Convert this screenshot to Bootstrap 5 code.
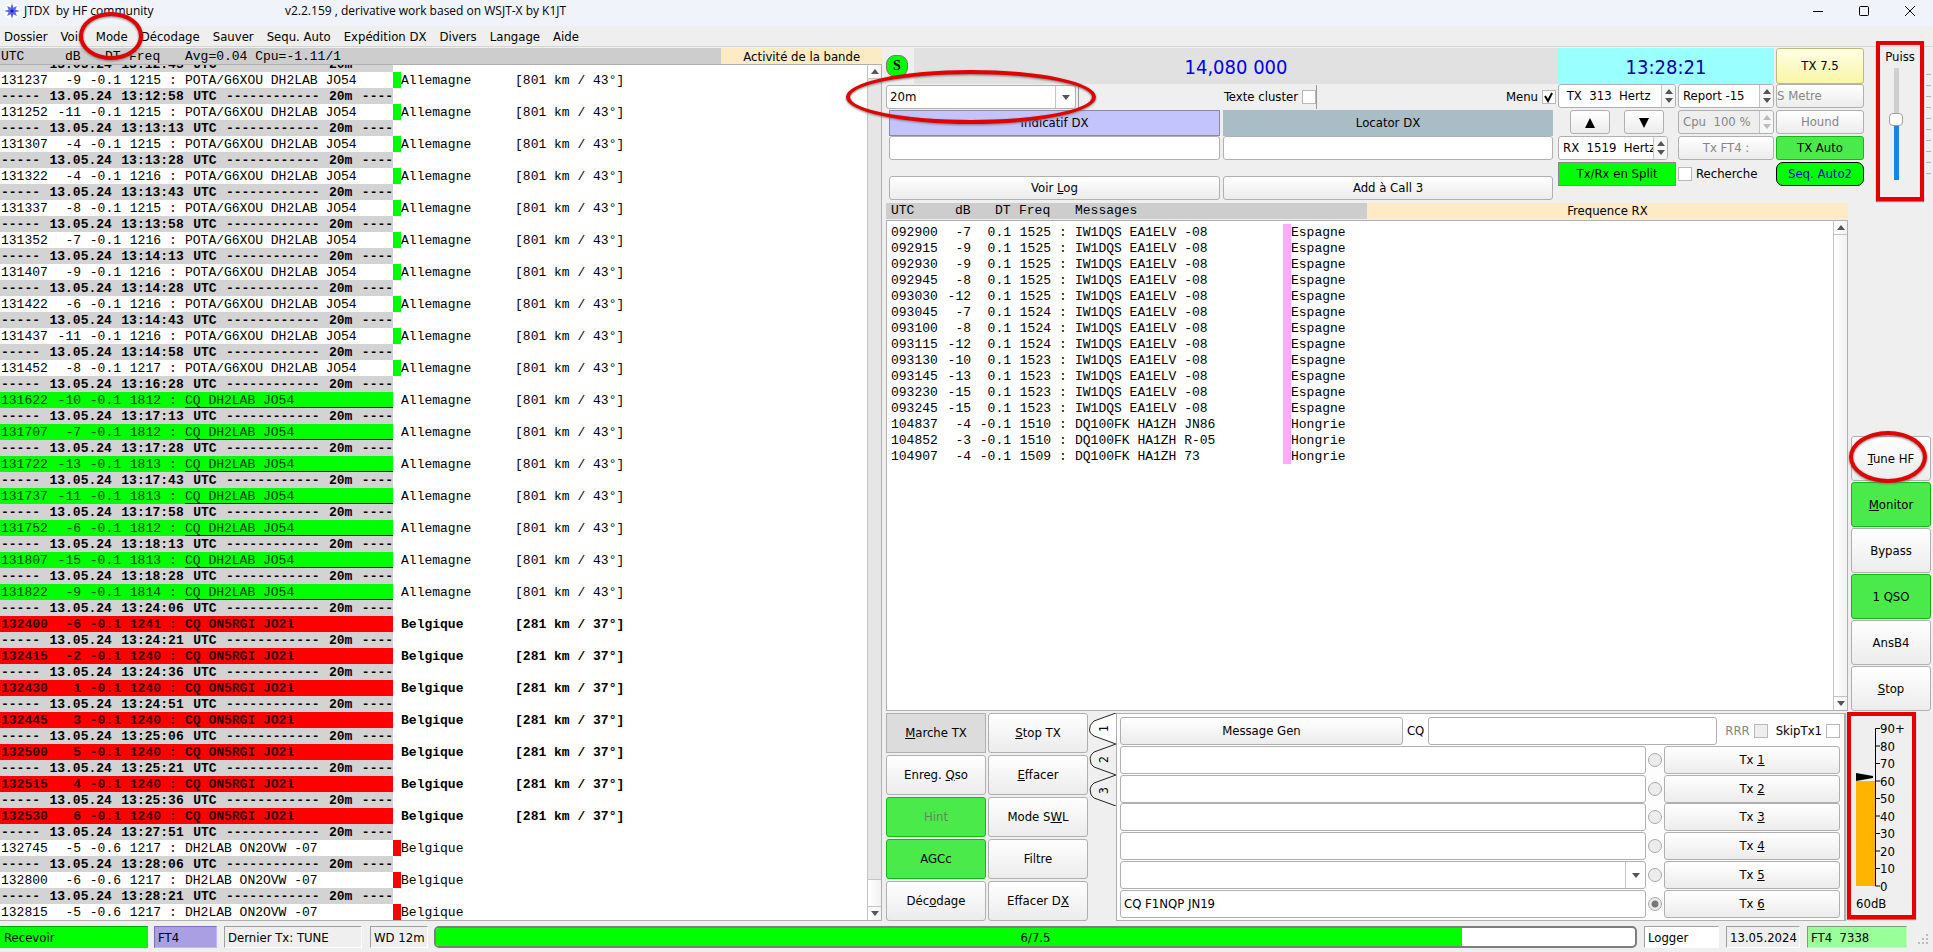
<!DOCTYPE html>
<html lang="fr">
<head>
<meta charset="utf-8">
<meta name="viewport" content="width=device-width, initial-scale=1">
<title>JTDX by HF community</title>
<link href="https://cdn.jsdelivr.net/npm/bootstrap@5.3.0/dist/css/bootstrap.min.css" rel="stylesheet">
<style>
:root { --edge:#b0b0b0; --face:#efefef; --live:#4aea4a; --mark:#e30000; }
body { font-family:"DejaVu Sans Condensed","DejaVu Sans",sans-serif; font-size:13px; line-height:16px; color:#000; background:var(--face); }
input, button, select { font:inherit; color:inherit; }
.mono { font-family:"Liberation Mono",monospace; font-size:13px; }

.title-bar { height:26px; background:#f0f3f9; font-family:"Open Sans",sans-serif; font-size:12px; padding:0 14px 4px 4px; }
.app-name { width:261px; white-space:pre; }
.win-tools { gap:28px; }
.win-btn { border:0; background:none; padding:0; width:18px; height:18px; line-height:0; }
.menu-bar { height:21px; border-bottom:1px solid #d4d4d4; padding:1px 0 0 4px; gap:13px; }
.menu-bar a { color:#000; text-decoration:none; }

.main-grid { display:grid; grid-template-columns:minmax(0,885fr) minmax(0,1048fr); min-height:0; padding-top:1px; }
.left-pane { padding-right:3px; min-height:0; }
.log-head { background:#cdcdcd; height:16px; line-height:18px; padding-left:1px; white-space:pre; }
.log-head.inset-head { padding-left:5px; line-height:16px; }
.h-utc { width:64px; } .h-db { width:40px; } .h-dt { width:24px; } .h-fr { width:56px; }
.log-title { background:#fcebc5; height:16px; }
.band-title { width:18.2%; line-height:18px; }
.log-box { background:#fff; border:1px solid var(--edge); border-left:0; min-height:0; }
.log-box.boxed { border-left:1px solid var(--edge); margin-top:1px; }
.log-view { min-width:0; overflow:hidden; }
.rx-view { padding:3px 0 0 3px; }
.c-utc{width:57px}.c-db{width:24px}.c-dt{width:40px}.c-fr{width:40px}.c-co{width:24px}.c-ms{width:208px}.c-fl{width:8px}.c-pl{width:114px}

.log-table { table-layout:fixed; width:100%; border-collapse:collapse; line-height:14px; }
.log-table td { height:16px; padding:2px 0 0; white-space:pre; overflow:hidden; }
.log-table td:first-child { padding-left:1px; }
.log-table .sep td.sep-cell { background:#d3d3d3; font-weight:bold; }
.log-table .calling td.on { background:#00ff00; color:#003800; }
.log-table .calling td.msg { box-shadow:inset 0 -1px #000; }
.log-table .wanted { font-weight:bold; }
.log-table .wanted td.on { background:#ff0000; color:#300; }
.flag-g { background:#00ff00; } .flag-r { background:#ff0000; } .flag-p { background:#ffaaff; }

.scroll-rail { width:14px; flex:none; background:#e6e6e6; border-left:1px solid #c4c4c4; }
.scroll-rail > * { border:0 solid #c4c4c4; width:100%; padding:0; line-height:0; }
.scroll-rail > :not(.rail-gap), .rail-full { background:linear-gradient(90deg,#fff,#f2f2f2); }
.scroll-rail > .rail-up { height:14px; border-bottom-width:1px; } .scroll-rail > .rail-down { height:14px; border-top-width:1px; }
.scroll-rail > .rail-thumb { height:27px; border-top-width:1px; }

.face { border:1px solid var(--edge); border-radius:3px; background:linear-gradient(#fff,#ececec); padding:0; text-align:center; white-space:nowrap; }
.face:disabled { color:#868686; }
.face.live { background:var(--live); border-color:#12b812; }
.face.live:disabled { color:#5d8a5d; }
.face.down { background:#dcdcdc; border-radius:0; }
.field { border:1px solid var(--edge); border-radius:3px; background:#fff; padding:0 3px; min-width:0; width:100%; }
.h24 { height:24px; }
.tick { appearance:none; flex:none; width:14px; height:14px; margin:0; border:1px solid #b8b8b8; background:#fff; }
.tick:disabled { background:#eee; }
.tick:checked { background:#fff url("data:image/svg+xml,%3Csvg xmlns='http://www.w3.org/2000/svg' viewBox='0 0 12 12'%3E%3Cpath d='M2 5l3 5 4-8' fill='none' stroke='black' stroke-width='2'/%3E%3C/svg%3E"); }

.freq { background:#e1e1e1; color:#0000ee; }
.clock { background:#99ffff; color:#0000a8; grid-column:span 2; }
.big { font-size:20px; line-height:38px; height:36px; }
.s-badge { width:22px; height:22px; margin:7px 6px 0 0; border:1px solid #777; border-radius:9px; background:#00ff00; font:bold 14px/20px "Liberation Serif",serif; text-align:center; }
.tx75 { background:linear-gradient(#ffffe6,#f8f6a4); border-color:#bcbc74; }
.right-main { padding-left:1px; min-width:0; min-height:0; }
.band { width:190px; }
.band-row { height:26px; }
.band-end { border-right:1px solid #999; width:3px; }
.cluster-gap { height:24px; width:226px; border-left:1px solid #999; }
.menu-tick { padding-right:2px; }
.pick { position:relative; }
.pick svg { position:absolute; right:6px; top:50%; margin-top:-2px; pointer-events:none; }
.pick::after { content:""; position:absolute; right:20px; top:1px; bottom:1px; border-left:1px solid #c4c4c4; }
.pick select { appearance:none; }
.dx-grid { display:grid; grid-template-columns:331fr 330fr; gap:0 3px; padding:0 5px 0 3px; grid-template-rows:26px 24px 16px 24px; }
.dx-log { grid-row:4; }
.dx-call { background:#c3c3fe; border:1px solid #8a8aa8; padding:0; }
.dx-loc { background:#a9bdc7; border:0; padding:0; }
.ctrl { width:306px; display:grid; grid-template-columns:118px 96px 88px; grid-template-rows:36px repeat(4,26px); gap:0 2px; }
.ctrl .face { height:24px; }
.ctrl .tx75 { height:36px; }
.nudge { gap:14px; } .nudge .face { width:40px; }
.spin { height:24px; border:1px solid var(--edge); border-radius:3px; background:#fff; display:flex; overflow:hidden; }
.spin input { border:0; background:none; min-width:0; flex:1; padding:0 0 0 4px; }
.spin.short-spin { width:110px; }
.spin svg { flex:none; border-left:1px solid #c4c4c4; background:#f6f6f6; }
.spin.off { background:#eee; color:#868686; }
.split { background:#00ff00; border:1px solid #888; height:24px; padding:0; }
.ctrl .auto2 { background:#00ff00; border:1px solid #000; border-radius:7px; color:#0000d0; }

.side { width:69px; }
.power { width:48px; height:160px; margin:-7px 0 0 12px; border:4px solid var(--mark); box-shadow:0 1px 1px #888; padding-top:4px; }
.power-slot { width:14px; height:112px; margin:3px 0 0 9px; }
.power-slot input { appearance:none; flex:none; width:112px; height:14px; margin:0; transform:rotate(-90deg); background:linear-gradient(90deg,#1287e8 54%,#cfcfcf 54%) center/100% 5px no-repeat; }
.power-slot input::-webkit-slider-thumb { appearance:none; width:13px; height:14px; border:1px solid #a0a0a0; border-radius:4px; background:#fff; }
.scale-ticks { width:5px; margin:26px 0 0 2px; }
.scale-ticks i { display:block; height:1px; margin-bottom:10px; background:#b4b4b4; }

.rx-area { min-height:0; }
.rx-pane { min-width:0; padding-top:2px; }
.side-btns { width:85px; padding:0 2px 0 3px; gap:1px; }
.side-btns .face { height:45px; width:100%; }
.tx-btns { width:202px; display:grid; grid-template-columns:1fr 1fr; gap:2px; }
.tx-btns .face { height:40px; width:100%; }
.bottom-pane { padding-top:2px; }
.tab-strip { width:27px; margin-left:1px; font-size:12px; }
.tab-strip button { display:block; border:0; background:none; padding:0; width:27px; height:31px; line-height:0; }
.gen-panel { background:#fdfdfd; border:1px solid var(--edge); border-right-width:2px; padding:3px 4px 2px 3px; min-width:0; }
.gen-head > .face, .gen-head > .field { flex:288 1 0; height:28px; }
.gen-row { display:grid; grid-template-columns:minmax(0,1fr) 18px 176px; align-items:center; }
.gen-row .field, .gen-row .face { height:28px; }
.gen-row input[type=radio] { appearance:none; width:14px; height:14px; margin:0 0 0 2px; border:1px solid #aaa; border-radius:50%; background:#ececec; }
.gen-row input[type=radio]:checked { background:radial-gradient(circle,#777 3px,#ececec 4px); }
.muted { color:#868686; }
.meter { width:69px; height:207px; margin:-1px 17px 0 1px; border:4px solid var(--mark); box-shadow:0 1px 1px #888; }

.status-bar { height:31px; padding:5px 0 4px; }
.cellbox { border:1px solid; border-color:#a0a0a0 #fff #fff #a0a0a0; padding:3px 3px 1px; white-space:pre; height:22px; }
.st-rx { width:148px; background:#00ff00; border-color:#00aa00 #00ff00 #00ff00; }
.st-mode { width:63px; margin-left:6px; background:#a99fe2; border-color:#7a70b8 #c0b8ff #c0b8ff #7a70b8; }
.st-tx { width:138px; margin-left:7px; } .st-wd { width:58px; margin-left:8px; }
.st-log { width:75px; background:#fff; } .st-date { width:74px; margin-left:7px; }
.st-ft { width:100px; margin-left:7px; background:#99ff99; border-color:#7aa07a #b8ffb8 #b8ffb8 #7aa07a; }
.period { border:2px solid #7d7d7d; border-radius:5px; height:22px; margin:0 7px 0 6px; background:#fff; position:relative; font-size:13px; }
.period .progress-bar { background:#00ff00; }
.period span { position:absolute; inset:0; text-align:center; line-height:20px; }
.grip { margin-left:10px; }

.ring-box { position:relative; }
.ring { position:absolute; border:4px solid var(--mark); border-radius:50%; pointer-events:none; filter:drop-shadow(0 1px 1px #777); z-index:5; }
.ring-mode { width:64px; height:48px; left:-17px; top:-17px; }
.ring-band { width:250px; height:54px; left:-40px; top:-15px; }
.ring-tune { width:78px; height:52px; left:-2px; top:-5px; }
</style>
</head>
<body class="vh-100 d-flex flex-column overflow-hidden">

<header class="title-bar d-flex align-items-center flex-shrink-0">
  <svg class="me-1" width="16" height="16" viewBox="0 0 16 16" aria-hidden="true"><circle cx="8" cy="8" r="8" fill="#fff"/><path d="M8 0l1.300 4.700L13 3l-1.700 3.700L16 8l-4.700 1.300L13 13l-3.700-1.700L8 16l-1.300-4.700L3 13l1.700-3.700L0 8l4.700-1.300L3 3l3.700 1.700z" fill="#5563ee"/><circle cx="8" cy="8" r="1.500" fill="#1a1ab0"/></svg>
  <span class="app-name">JTDX  by HF community</span>
  <span class="flex-fill">v2.2.159 , derivative work based on WSJT-X by K1JT</span>
  <div class="win-tools d-flex">
    <button class="win-btn" aria-label="Réduire"><svg width="18" height="18"><path d="M4 9.500h10" stroke="#000"/></svg></button>
    <button class="win-btn" aria-label="Agrandir"><svg width="18" height="18"><rect x="4.500" y="4.500" width="9" height="9" rx="1" fill="none" stroke="#000"/></svg></button>
    <button class="win-btn" aria-label="Fermer"><svg width="18" height="18"><path d="M4 4l10 10M14 4L4 14" stroke="#000"/></svg></button>
  </div>
</header>

<nav class="menu-bar d-flex align-items-center flex-shrink-0">
  <a href="#">Dossier</a><a href="#">Voir</a><span class="ring-box"><a href="#">Mode</a><i class="ring ring-mode"></i></span><a href="#">Décodage</a><a href="#">Sauver</a><a href="#">Sequ. Auto</a><a href="#">Expédition DX</a><a href="#">Divers</a><a href="#">Langage</a><a href="#">Aide</a>
</nav>

<main class="main-grid flex-fill">
  <section class="left-pane d-flex flex-column">
    <div class="d-flex flex-shrink-0">
      <div class="log-head mono d-flex flex-fill"><span class="h-utc">UTC</span><span class="h-db">dB</span><span class="h-dt">DT</span><span class="h-fr">Freq</span><span>Avg=0.04 Cpu=-1.11/1</span></div>
      <div class="log-title band-title text-center">Activité de la bande</div>
    </div>
    <div class="log-box d-flex flex-fill">
      <div class="log-view flex-fill d-flex flex-column justify-content-end">
        <table class="log-table mono flex-shrink-0" id="band-log"></table>
      </div>
      <div class="scroll-rail d-flex flex-column">
        <button class="rail-up" aria-label="Haut"><svg width="8" height="5"><path d="M0 5l4-5 4 5z" fill="#555"/></svg></button>
        <div class="rail-gap flex-fill"></div>
        <div class="rail-thumb"></div>
        <button class="rail-down" aria-label="Bas"><svg width="8" height="5"><path d="M0 0l4 5 4-5z" fill="#555"/></svg></button>
      </div>
    </div>
  </section>

  <section class="right-main d-flex flex-column">
    <div class="d-flex flex-shrink-0">
      <div class="flex-fill">
        <div class="d-flex"><div class="s-badge">S</div><div class="freq big flex-fill text-center">14,080 000</div></div>
        <div class="band-row d-flex align-items-center">
          <div class="ring-box pick band"><select class="field h24" aria-label="Bande"><option>20m</option></select><svg width="8" height="5"><path d="M0 0h8l-4 5z" fill="#555"/></svg><i class="ring ring-band"></i></div><span class="band-end h24"></span>
          <div class="menu-tick flex-fill d-flex justify-content-end align-items-center">
            <label for="cluster" class="me-1">Texte cluster</label><input type="checkbox" class="tick" id="cluster"><span class="cluster-gap d-flex justify-content-end align-items-center pe-1"><label for="menu">Menu</label></span><input type="checkbox" class="tick" id="menu" checked>
          </div>
        </div>
        <div class="dx-grid">
          <button class="dx-call">Indicatif DX</button><button class="dx-loc">Locator DX</button>
          <input class="field" aria-label="Indicatif DX"><input class="field" aria-label="Locator DX">
          <button class="face dx-log">Voir <u>L</u>og</button><button class="face dx-log">Add à Call 3</button>
        </div>
      </div>
      <div class="ctrl">
        <div class="clock big text-center">13:28:21</div><button class="face tx75">TX 7.5</button>
        <div class="spin"><input value=" TX  313  Hertz" aria-label="TX Hertz"><svg width="14" height="22"><path d="M3 9l4-5 4 5zM3 13l4 5 4-5z" fill="#555"/></svg></div>
        <div class="spin"><input value="Report -15" aria-label="Report"><svg width="14" height="22"><path d="M3 9l4-5 4 5zM3 13l4 5 4-5z" fill="#555"/></svg></div>
        <button class="face text-start" disabled>S Metre</button>
        <div class="nudge d-flex justify-content-center"><button class="face" aria-label="Monter"><svg width="10" height="10"><path d="M0 10L5 0l5 10z"/></svg></button><button class="face" aria-label="Descendre"><svg width="10" height="10"><path d="M0 0l5 10 5-10z"/></svg></button></div>
        <div class="spin off"><input value="Cpu  100 %" aria-label="Cpu" disabled><svg width="14" height="22"><path d="M3 9l4-5 4 5zM3 13l4 5 4-5z" fill="#bbb"/></svg></div>
        <button class="face" disabled>Hound</button>
        <div class="spin short-spin"><input value="RX  1519  Hertz" aria-label="RX Hertz"><svg width="14" height="22"><path d="M3 9l4-5 4 5zM3 13l4 5 4-5z" fill="#555"/></svg></div>
        <button class="face" disabled>Tx FT4 :</button><button class="face live">TX Auto</button>
        <button class="split">Tx/Rx en Split</button>
        <div class="d-flex align-items-center h24"><input type="checkbox" class="tick" id="rech"><label for="rech" class="ms-1">Recherche</label></div>
        <button class="face auto2">Seq. Auto2</button>
      </div>
      <div class="side d-flex align-items-start flex-shrink-0">
        <div class="power text-center flex-shrink-0">
          <label for="puiss">Puiss</label>
          <div class="power-slot d-flex justify-content-center align-items-center"><input type="range" id="puiss" value="55"></div>
        </div>
        <div class="scale-ticks"><i></i><i></i><i></i><i></i><i></i><i></i><i></i><i></i><i></i><i></i></div>
      </div>
    </div>

    <div class="rx-area d-flex flex-fill">
      <div class="rx-pane flex-fill d-flex flex-column">
        <div class="d-flex flex-shrink-0"><div class="log-head inset-head mono d-flex w-50"><span class="h-utc">UTC</span><span class="h-db">dB</span><span class="h-dt">DT</span><span class="h-fr">Freq</span><span>Messages</span></div><div class="log-title w-50 text-center">Frequence RX</div></div>
        <div class="log-box boxed d-flex flex-fill">
          <div class="log-view rx-view flex-fill"><table class="log-table mono" id="rx-log"></table></div>
          <div class="scroll-rail d-flex flex-column">
            <button class="rail-up" aria-label="Haut"><svg width="8" height="5"><path d="M0 5l4-5 4 5z" fill="#555"/></svg></button>
            <div class="rail-full flex-fill"></div>
            <button class="rail-down" aria-label="Bas"><svg width="8" height="5"><path d="M0 0l4 5 4-5z" fill="#555"/></svg></button>
          </div>
        </div>
      </div>
      <div class="side-btns d-flex flex-column justify-content-end flex-shrink-0">
        <div class="ring-box"><button class="face d-block"><u>T</u>une HF</button><i class="ring ring-tune"></i></div>
        <button class="face live"><u>M</u>onitor</button>
        <button class="face">Bypass</button>
        <button class="face live">1 QSO</button>
        <button class="face">AnsB4</button>
        <button class="face"><u>S</u>top</button>
      </div>
    </div>

    <div class="bottom-pane d-flex flex-shrink-0">
      <div class="tx-btns flex-shrink-0">
        <button class="face down"><u>M</u>arche TX</button><button class="face"><u>S</u>top TX</button>
        <button class="face">Enreg. <u>Q</u>so</button><button class="face"><u>E</u>ffacer</button>
        <button class="face live" disabled>Hint</button><button class="face">Mode S<u>W</u>L</button>
        <button class="face live">AGCc</button><button class="face">Filtre</button>
        <button class="face">Déc<u>o</u>dage</button><button class="face">Effacer D<u>X</u></button>
      </div>
      <div class="tab-strip flex-shrink-0">
        <button><svg width="27" height="31"><path d="M27 0L5 8Q0 12 0.500 17Q0 20 5 23L27 31" fill="#fff" stroke="#222"/><text transform="translate(19 19) rotate(-90)">1</text></svg></button>
        <button><svg width="27" height="31"><path d="M27 0L5 8Q0 12 1.500 17Q1 20 5 23L27 31" fill="#f0f0f0" stroke="#222"/><text transform="translate(19 19) rotate(-90)">2</text></svg></button>
        <button><svg width="27" height="31"><path d="M27 0L5 8Q0 12 1.500 17Q1 20 5 23L27 31" fill="#f0f0f0" stroke="#222"/><text transform="translate(19 19) rotate(-90)">3</text></svg></button>
      </div>
      <div class="gen-panel flex-fill d-flex flex-column justify-content-between">
        <div class="gen-head d-flex align-items-center">
          <button class="face">Message Gen</button>
          <label for="cq" class="mx-1">CQ</label><input class="field" id="cq">
          <label for="rrr" class="ms-2 me-1 muted">RRR</label><input type="checkbox" class="tick" id="rrr" disabled>
          <label for="skip" class="ms-2 me-1">SkipTx1</label><input type="checkbox" class="tick" id="skip">
        </div>
        <div class="gen-row"><input class="field" aria-label="Message 1"><input type="radio" name="tx" aria-label="Tx 1"><button class="face">Tx <u>1</u></button></div>
        <div class="gen-row"><input class="field" aria-label="Message 2"><input type="radio" name="tx" aria-label="Tx 2"><button class="face">Tx <u>2</u></button></div>
        <div class="gen-row"><input class="field" aria-label="Message 3"><input type="radio" name="tx" aria-label="Tx 3"><button class="face">Tx <u>3</u></button></div>
        <div class="gen-row"><input class="field" aria-label="Message 4"><input type="radio" name="tx" aria-label="Tx 4"><button class="face">Tx <u>4</u></button></div>
        <div class="gen-row"><div class="pick"><select class="field d-block" aria-label="Message 5"><option></option></select><svg width="8" height="5"><path d="M0 0h8l-4 5z" fill="#555"/></svg></div><input type="radio" name="tx" aria-label="Tx 5"><button class="face">Tx <u>5</u></button></div>
        <div class="gen-row"><input class="field" aria-label="Message 6" value="CQ F1NQP JN19"><input type="radio" name="tx" aria-label="Tx 6" checked><button class="face">Tx <u>6</u></button></div>
      </div>
      <div class="meter flex-shrink-0">
        <svg width="61" height="199" aria-label="60dB"><rect x="5" y="65" width="19" height="105" fill="#ffb400"/><path d="M5 57l17 3v2l-17 3z"/><path d="M29 12.500h-4.500v157.500h4.500M24 30h5M24 47.500h5M24 65h5M24 82.500h5M24 100h5M24 117.500h5M24 135h5M24 152.500h5" fill="none" stroke="#000"/><g id="meter-labels"></g><text x="5" y="192">60dB</text></svg>
      </div>
    </div>
  </section>
</main>

<footer class="status-bar d-flex align-items-center flex-shrink-0">
  <div class="cellbox st-rx">Recevoir</div>
  <div class="cellbox st-mode">FT4</div>
  <div class="cellbox st-tx">Dernier Tx: TUNE</div>
  <div class="cellbox st-wd">WD 12m</div>
  <div class="period progress flex-fill" role="progressbar" aria-label="Période"><div class="progress-bar" style="width:85.6%"></div><span>6/7.5</span></div>
  <div class="cellbox st-log">Logger</div>
  <div class="cellbox st-date">13.05.2024</div>
  <div class="cellbox st-ft">FT4  7338</div>
  <svg class="grip align-self-end" width="16" height="14" fill="#bbb"><path d="M9 0h2v2h-2zM5 4h2v2H5zM9 4h2v2h-2zM1 8h2v2H1zM5 8h2v2H5zM9 8h2v2h-2z"/></svg>
</footer>

<script>
const cols = '<colgroup>' + ['utc','db','dt','fr','co','ms','fl','pl'].map(c => `<col class="c-${c}">`).join('') + '<col></colgroup>';

function messageRow(utc, db, dt, freq, msg, kind, flag, place, dist) {
  return `<tr class="${kind}"><td class="on">${utc}</td><td class="on text-end">${db}</td><td class="on text-end">${dt}</td>` +
    `<td class="on text-end">${freq}</td><td class="on text-center">:</td><td class="on msg">${msg}</td>` +
    `<td class="${flag}"></td><td>${place}</td><td>${dist}</td></tr>`;
}
function separatorRow(time) {
  return `<tr class="sep"><td class="sep-cell" colspan="6"><div class="d-flex justify-content-between"><span>-----</span><span>13.05.24</span><span>${time}</span><span>UTC</span><span>------------</span><span>20m</span><span>----</span></div></td><td colspan="3"></td></tr>`;
}

const de = ['Allemagne', '[801 km / 43°]'], be = ['Belgique', '[281 km / 37°]'];
const band = [];
const pota = [['13:12:43','131237',-9,1215],['13:12:58','131252',-11,1215],['13:13:13','131307',-4,1215],['13:13:28','131322',-4,1216],['13:13:43','131337',-8,1215],['13:13:58','131352',-7,1216],['13:14:13','131407',-9,1216],['13:14:28','131422',-6,1216],['13:14:43','131437',-11,1216],['13:14:58','131452',-8,1217]];
const calls = [['13:16:28','131622',-10,1812],['13:17:13','131707',-7,1812],['13:17:28','131722',-13,1813],['13:17:43','131737',-11,1813],['13:17:58','131752',-6,1812],['13:18:13','131807',-15,1813],['13:18:28','131822',-9,1814]];
const wanted = [['13:24:06','132400',-6,1241],['13:24:21','132415',-2,1240],['13:24:36','132430',1,1240],['13:24:51','132445',3,1240],['13:25:06','132500',5,1240],['13:25:21','132515',4,1240],['13:25:36','132530',6,1240]];
const last = [['13:27:51','132745',-5,1217],['13:28:06','132800',-6,1217],['13:28:21','132815',-5,1217]];
pota.forEach(r => band.push(separatorRow(r[0]), messageRow(r[1], r[2], '-0.1', r[3], 'POTA/G6XOU DH2LAB JO54', '', 'flag-g', ...de)));
calls.forEach(r => band.push(separatorRow(r[0]), messageRow(r[1], r[2], '-0.1', r[3], 'CQ DH2LAB JO54', 'calling', '', ...de)));
wanted.forEach(r => band.push(separatorRow(r[0]), messageRow(r[1], r[2], '-0.1', r[3], 'CQ ON5RGI JO21', 'wanted', '', ...be)));
last.forEach(r => band.push(separatorRow(r[0]), messageRow(r[1], r[2], '-0.6', r[3], 'DH2LAB ON2OVW -07', '', 'flag-r', be[0], '')));
document.getElementById('band-log').innerHTML = cols + band.join('');

const rx = [['092900',-7,1525],['092915',-9,1525],['092930',-9,1525],['092945',-8,1525],['093030',-12,1525],['093045',-7,1524],['093100',-8,1524],['093115',-12,1524],['093130',-10,1523],['093145',-13,1523],['093230',-15,1523],['093245',-15,1523]]
  .map(r => messageRow(r[0], r[1], '0.1', r[2], 'IW1DQS EA1ELV -08', '', 'flag-p', 'Espagne', ''));
[['104837',-4,1510,'JN86'],['104852',-3,1510,'R-05'],['104907',-4,1509,'73']]
  .forEach(r => rx.push(messageRow(r[0], r[1], '-0.1', r[2], 'DQ100FK HA1ZH ' + r[3], '', 'flag-p', 'Hongrie', '')));
document.getElementById('rx-log').innerHTML = cols + rx.join('');

document.getElementById('meter-labels').innerHTML =
  ['90+',80,70,60,50,40,30,20,10,0].map((v, i) => `<text x="29" y="${17 + Math.round(i * 17.5)}">${v}</text>`).join('');
</script>
<script src="https://cdn.jsdelivr.net/npm/bootstrap@5.3.0/dist/js/bootstrap.bundle.min.js"></script>
</body>
</html>
